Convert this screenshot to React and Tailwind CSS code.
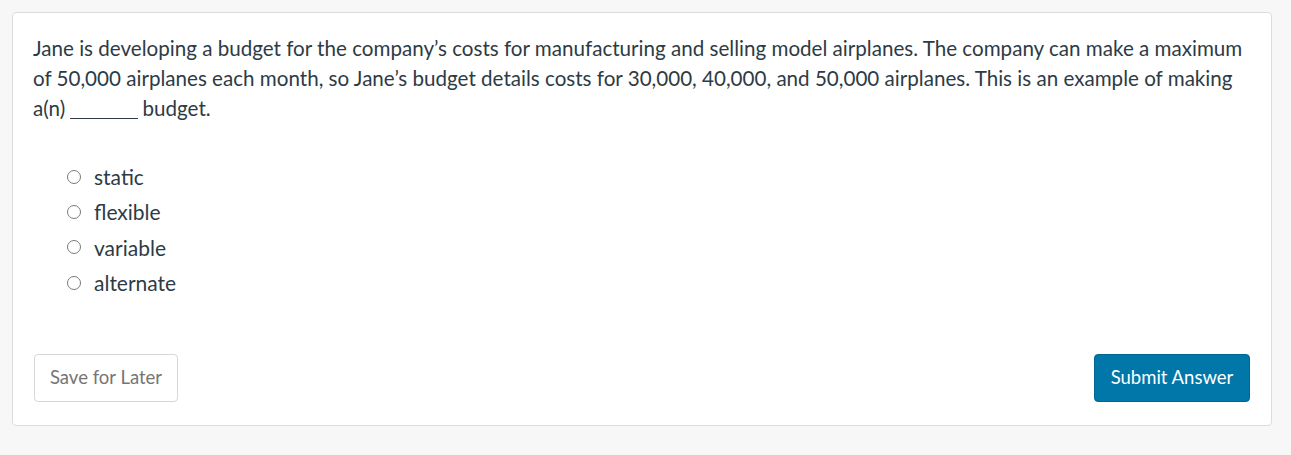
import React from "react";

const options = ["static", "flexible", "variable", "alternate"];

export default function App() {
  return (
    <div
      className="min-h-[455px] w-full bg-[#f7f7f7] pt-[12px] px-[12px]"
      style={{ fontFamily: "Lato, 'Open Sans', sans-serif" }}
    >
      <div className="w-[1260px] h-[414px] bg-white border border-[#dcdcdc] rounded-[4px] pt-[20px] pl-[20px] pr-[21px] flex flex-col">
        <p className="text-[20.6px] leading-[30px] text-[#2d3b45]">
          Jane is developing a budget for the company’s costs for manufacturing and selling model airplanes. The company can make a maximum of 50,000 airplanes each month, so Jane’s budget details costs for 30,000, 40,000, and 50,000 airplanes. This is an example of making a(n){" "}
          <span className="inline-block w-[68px] h-[1px] bg-[#2d3b45] align-[-3px] mr-[4px]"></span>
          budget.
        </p>
        <div className="mt-[36px] pl-[34px] flex flex-col">
          {options.map((o) => (
            <label key={o} className="h-[35.33px] flex items-center text-[21px] text-[#2d3b45]">
              <span className="w-[14px] h-[14px] rounded-full border-[1.4px] border-[#7a7a7a] bg-white shrink-0" />
              <span className="ml-[13px]">{o}</span>
            </label>
          ))}
        </div>
        <div className="mt-[54px] flex justify-between pl-[1px]">
          <button className="w-[144px] h-[48px] border border-[#d6d6d6] rounded-[4px] bg-white text-[18.5px] text-[#757575]">
            Save for Later
          </button>
          <button className="w-[156px] h-[48px] border border-[#00658f] rounded-[4px] bg-[#0077a8] text-[18.5px] text-white">
            Submit Answer
          </button>
        </div>
      </div>
    </div>
  );
}
